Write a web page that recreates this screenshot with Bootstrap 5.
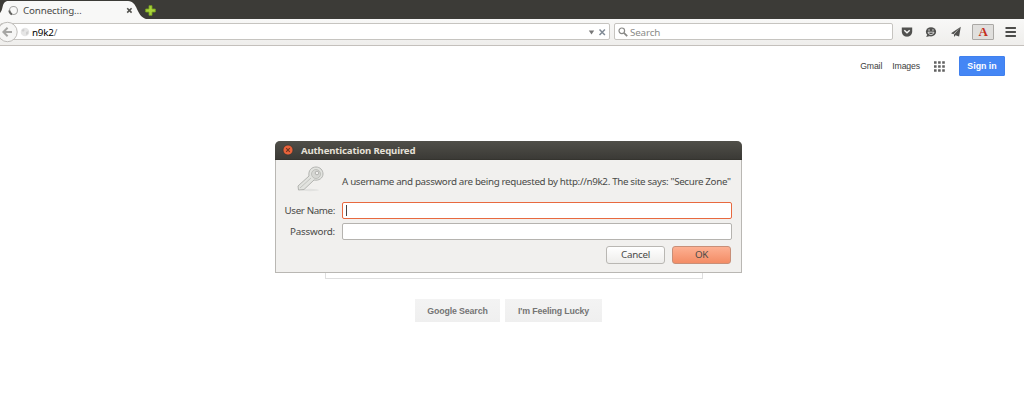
<!DOCTYPE html>
<html lang="en">
<head>
<meta charset="utf-8">
<meta name="viewport" content="width=device-width, initial-scale=1">
<title>n9k2</title>
<link href="https://cdn.jsdelivr.net/npm/bootstrap@5.3.0/dist/css/bootstrap.min.css" rel="stylesheet">
<style>
body{font-family:"Noto Sans","Open Sans",sans-serif;font-size:9.8px;letter-spacing:-.15px;line-height:14px;color:#4a4a48;background:#fff;height:408px;overflow:hidden}
svg{display:block;flex:none}
.tabstrip{height:19px;background:#3c3b37;position:relative}
.tabshape{position:absolute;left:0;top:0}
.tabtext{width:140px;height:19px;padding:2px 7px 0 8px;position:relative}
.newtab{margin:5px 0 0 5px}
.toolbar{height:27px;background:linear-gradient(#f8f8f7,#efeeec);border-bottom:1px solid #c4c0bc;padding:4px 7px 5px 0}
.field{height:17px;background:#fff;border:1px solid #c6c4c0;border-radius:2px}
.url{width:610px;padding-left:19px;position:relative}
.host{margin:2px 0 0 2px;letter-spacing:-.2px}
.back{position:absolute;left:-4px;top:-3px}
.search{width:279px;margin-left:4px;padding-left:3px;color:#8b8b89}
.addon{width:22px;height:16px;border:1px solid #aaa8a5;background:#e0dfdd;border-radius:1px;font:bold 13px/14px "Liberation Serif",serif;color:#c5311d}
.google{font-family:"Liberation Sans",Arial,sans-serif;letter-spacing:0}
.topnav{height:41px;padding:10px 19px 0 0;font-size:8.7px;letter-spacing:-.12px;color:#404040}
.signin{width:46px;height:20px;background:#4486f5;border:1px solid #4080ee;border-radius:1px;color:#fff;font-weight:bold;font-size:8.8px;letter-spacing:0}
.stage{width:467px;margin:54px 0 0 275px}
.dialog{position:relative;z-index:1;height:132px;background:#f1f0ee;border:1px solid #b9b7b3;border-top:0;border-radius:5px 5px 0 0}
.titlebar{height:19px;margin:0 -1px;padding:0 7px;border-radius:5px 5px 0 0;background:linear-gradient(#504f49,#3b3a36);border-bottom:1px solid #35342f;color:#e5e0d7;font-weight:bold;font-size:9.6px}
.prompt{height:42px;padding-left:20px}
.message{margin:2px 0 0 18px;letter-spacing:-.34px}
.entry{height:17px;width:390px;border:1px solid #b5b3af;border-radius:2px;background:#fff}
.entry.active{border-color:#e8693f}
.fieldlabel{width:59px;margin-right:7px;text-align:right;letter-spacing:-.38px}
.fieldlabel.pw{letter-spacing:-.22px}
.dbtn{width:59px;height:18px;border:1px solid #b9b7b3;border-radius:3px;background:linear-gradient(#fff,#eeedeb);letter-spacing:-.25px}
.dbtn.ok{border-color:#c88f78;background:linear-gradient(#fdb092,#f38c65)}
.caret{width:1px;height:11px;background:#444;margin-left:3px}
.searchbox{width:378px;height:28px;margin:-22px 0 0 50px;border:1px solid #dedede}
.gbtn{height:23px;background:linear-gradient(#f3f3f3,#efefef);color:#757575;font-weight:bold;font-size:8.8px;letter-spacing:-.14px}
</style>
</head>
<body>
<div class="tabstrip d-flex">
  <svg class="tabshape" width="160" height="19"><path d="M0 19V13C4 9 1 1 9 1H128C138 1 136 16 146 19Z" fill="#f8f8f7"/></svg>
  <div class="tabtext d-flex align-items-center">
    <svg width="11" height="11" viewBox="0 0 11 11" fill="none"><circle cx="5.5" cy="5.5" r="4" stroke="#a5a5a3" stroke-width="1.1"/><path d="M1.4 5.5A4 4 0 0 0 4 9.2" stroke="#62625f" stroke-width="2"/></svg>
    <span class="ms-1">Connecting…</span>
    <svg class="ms-auto" width="7" height="7" viewBox="0 0 7 7"><path d="M1.2 1.2l4.4 4.4M5.6 1.2L1.2 5.6" stroke="#53534f" stroke-width="1.6"/></svg>
  </div>
  <svg class="newtab position-relative" width="11" height="11" viewBox="0 0 11 11"><path d="M4 .7h3V4h3.3v3H7v3.3H4V7H.7V4H4z" fill="#a9d33a" stroke="#79a51e" stroke-width=".8"/></svg>
</div>
<div class="toolbar d-flex align-items-center">
  <div class="field url d-flex align-items-center">
    <svg class="back" width="22" height="22" viewBox="0 0 22 22"><circle cx="10.5" cy="11" r="9.7" fill="#f6f6f5" stroke="#bebcb9"/><path d="M15 11H7M10.6 6.8L6.4 11l4.2 4.2" fill="none" stroke="#a6a6a4" stroke-width="2"/></svg>
    <svg width="10" height="10" viewBox="0 0 10 10"><circle cx="5" cy="5" r="4.3" fill="#e6e6e6"/><path d="M1.5 3l2-1 1.3 1L3 5zM6 5l2.5-1-.5 3-2 1z" fill="#d0d0d0"/></svg>
    <span class="host text-black">n9k2<span style="color:#777">/</span></span>
    <svg class="ms-auto" width="22" height="10" viewBox="0 0 22 10"><path d="M1.8 3.6h5.4L4.5 7.4z" fill="#777"/><path d="M12.5 2.4l5.4 5.6M17.9 2.4l-5.4 5.6" stroke="#7f8994" stroke-width="1.5"/></svg>
  </div>
  <div class="field search d-flex align-items-center"><svg width="10" height="10" viewBox="0 0 10 10" fill="none" stroke="#888886"><circle cx="3.8" cy="3.8" r="2.8" stroke-width="1.2"/><path d="M5.9 5.9L9.2 9.2" stroke-width="1.7"/></svg><span style="margin:2px 0 0 2px">Search</span></div>
  <svg style="margin-left:8px" width="12" height="12" viewBox="0 0 12 12"><path d="M.8 1.5h10.4v4C11.2 9 8.3 10.7 6 10.7S.8 9 .8 5.5z" fill="#51514f"/><path d="M3.3 4.3L6 6.8l2.7-2.5" fill="none" stroke="#f5f5f4" stroke-width="1.5"/></svg>
  <svg style="margin-left:12px" width="12" height="12" viewBox="0 0 12 12"><ellipse cx="6" cy="5.8" rx="5.1" ry="4.6" fill="#51514f"/><path d="M2.5 8L1.2 11l4-1z" fill="#51514f"/><path d="M3.3 4h1.5M7.2 4h1.5" stroke="#eee"/><path d="M3 6.2h6Q8.3 8.7 6 8.7T3 6.2z" fill="none" stroke="#eee" stroke-width=".8"/></svg>
  <svg style="margin-left:13px" width="12" height="12" viewBox="0 0 12 12"><path d="M10.8.8L1 7.2l2.4 1zM10.8.8L4 8.5V11l1.5-1.8 3.6 1.2z" fill="#51514f"/></svg>
  <div class="addon d-flex justify-content-center" style="margin-left:10px">A</div>
  <svg style="margin-left:11px" width="12" height="12" viewBox="0 0 12 12"><path d="M.5 2h10.4M.5 6h10.4M.5 10h10.4" stroke="#4c4c4a" stroke-width="2"/></svg>
</div>
<nav class="google topnav d-flex justify-content-end align-items-start">
  <div class="d-flex align-items-center" style="height:20px"><span>Gmail</span><span style="margin-left:10px">Images</span>
  <svg style="margin:0 14px" width="11" height="11" viewBox="0 0 11 11"><path d="M0 1.5h11M0 5.5h11M0 9.5h11" stroke="#616161" stroke-width="2.4" stroke-dasharray="2.6 1.5"/></svg>
  <div class="signin d-flex align-items-center justify-content-center">Sign in</div></div>
</nav>
<main class="stage">
  <section class="dialog">
    <header class="titlebar d-flex align-items-center"><svg width="12" height="12" viewBox="0 0 12 12"><circle cx="6" cy="6" r="5" fill="#ea633b" stroke="#34332f" stroke-width=".7"/><path d="M4.2 4.2l3.6 3.6M7.8 4.2L4.2 7.8" stroke="#70341f" stroke-width="1.1"/></svg><span style="margin:1px 0 0 7px">Authentication Required</span></header>
    <div class="prompt d-flex align-items-center">
      <svg style="margin-top:-4px" width="28" height="26" viewBox="0 0 28 26"><ellipse cx="14" cy="24" rx="9" ry="1.2" fill="#e2e2e0"/><path d="M13 10C12 4 16 1 20 1s7 3 7 7-4 7-9 6L8 23.5 2.5 24 2 20z" fill="#e2e3df" stroke="#acada9" stroke-width=".9"/><path d="M4 22L15 12" stroke="#c2c3bf"/><circle cx="20" cy="8" r="4.5" fill="#d6d7d3" stroke="#b6b7b3" stroke-width=".8"/><circle cx="21" cy="7" r="1.8" fill="#f1f0ee" stroke="#a5a6a2" stroke-width=".8"/></svg>
      <span class="message text-nowrap">A username and password are being requested by http://n9k2. The site says: "Secure Zone"</span>
    </div>
    <div class="d-flex align-items-center"><label class="fieldlabel text-nowrap">User Name:</label><div class="entry active d-flex align-items-center"><div class="caret"></div></div></div>
    <div class="d-flex align-items-center" style="margin-top:4px"><label class="fieldlabel pw">Password:</label><div class="entry"></div></div>
    <div class="d-flex justify-content-end" style="gap:7px;margin:6px 10px 0 0"><div class="dbtn d-flex align-items-center justify-content-center">Cancel</div><div class="dbtn ok d-flex align-items-center justify-content-center">OK</div></div>
  </section>
  <div class="searchbox"></div>
  <div class="google d-flex" style="margin:20px 0 0 140px;gap:5px"><div class="gbtn d-flex align-items-center justify-content-center" style="width:85px">Google Search</div><div class="gbtn d-flex align-items-center justify-content-center" style="width:97px">I'm Feeling Lucky</div></div>
</main>
<script src="https://cdn.jsdelivr.net/npm/bootstrap@5.3.0/dist/js/bootstrap.bundle.min.js"></script>
</body>
</html>
